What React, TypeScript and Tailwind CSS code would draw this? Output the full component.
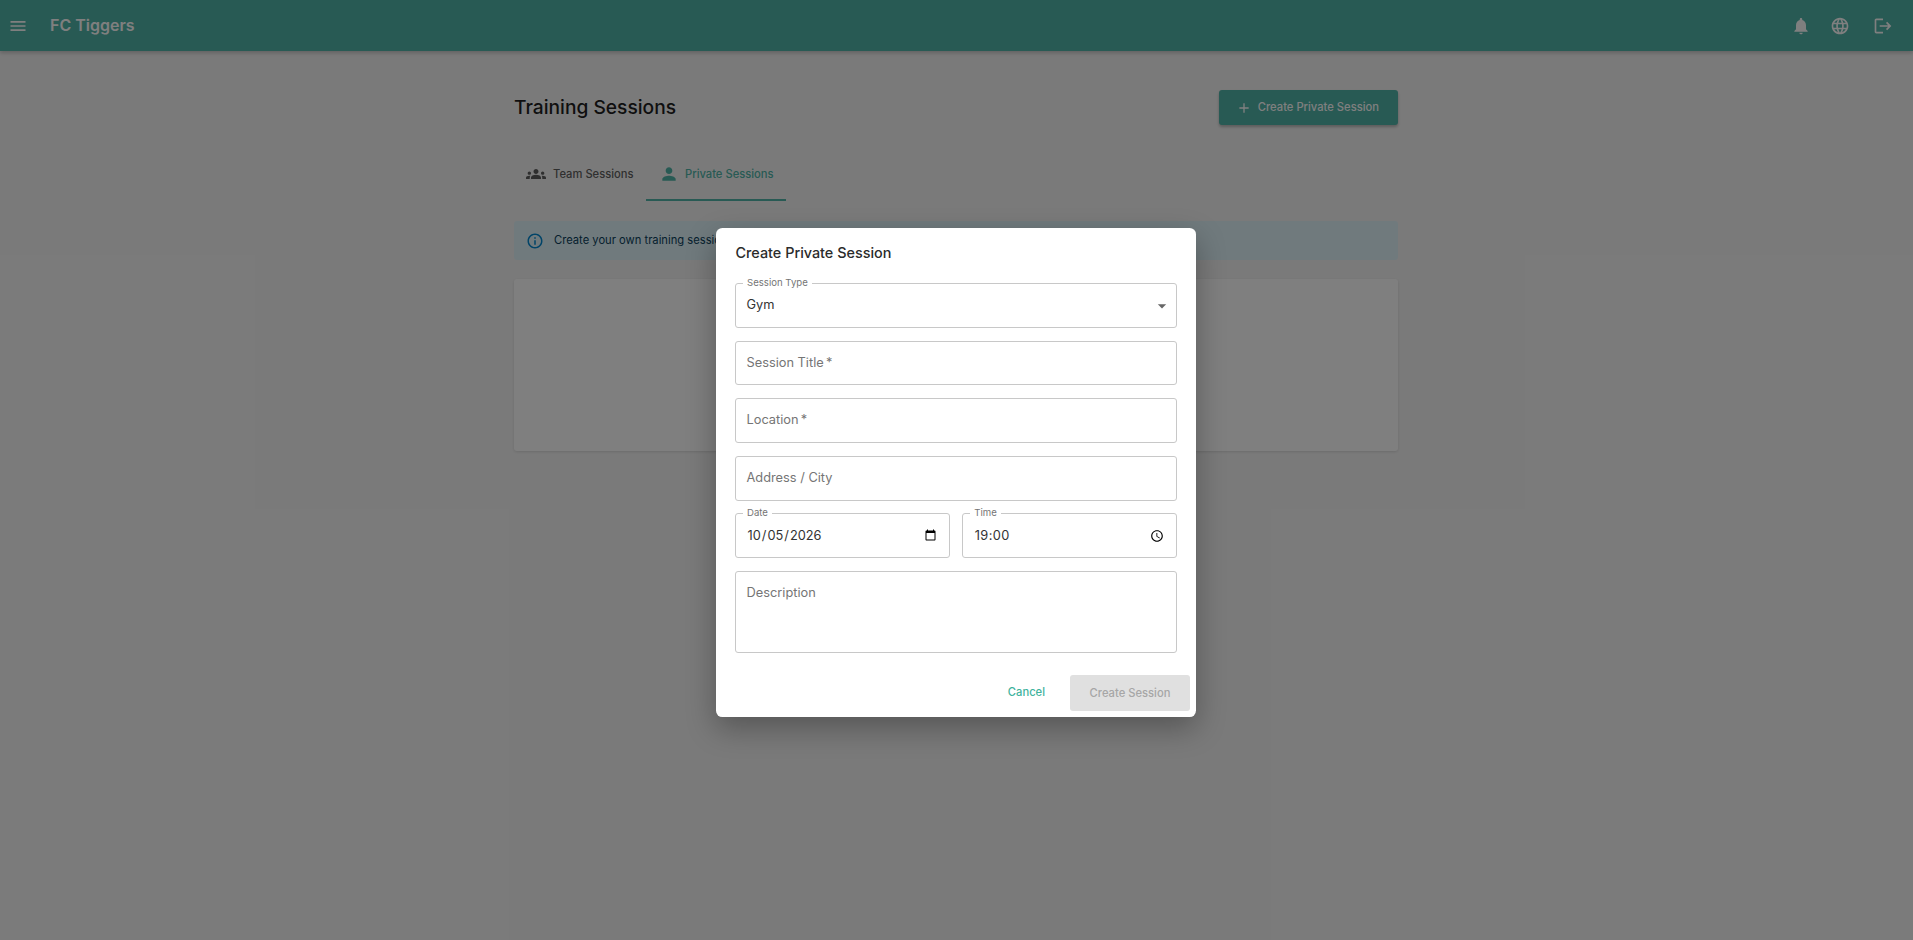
import { MdMenu, MdNotifications, MdLanguage, MdLogout, MdAdd, MdGroups, MdPerson, MdInfoOutline, MdArrowDropDown, MdOutlineAccessTime } from "react-icons/md";

const Field = ({ label, className = "h-[45px]" }: { label: string; className?: string }) => (
  <div className={`rounded-[3px] border border-[#c8c8c8] px-[10.5px] text-[12.8px] text-[#757575] ${className}`}>
    <div className="pt-[10.5px] leading-[20px]">{label}</div>
  </div>
);

const LegendField = ({ label, children }: { label: string; children: React.ReactNode }) => (
  <div className="relative flex h-[45px] items-center rounded-[3px] border border-[#c8c8c8] pl-[10.5px] pr-[10px] text-[12.8px] text-[#333]">
    <span className="absolute -top-[7px] left-[7px] bg-white px-[4px] text-[9.6px] leading-[12px] text-[#757575]">{label}</span>
    {children}
  </div>
);

const App = () => {
  return (
    <div className="relative h-[940px] w-full overflow-hidden bg-[#f5f5f5] font-['Inter',sans-serif]">
      <header className="flex h-[51px] items-center bg-[#50b4a8] pl-[8px] pr-[20px] text-white shadow-[0_2px_4px_rgba(0,0,0,0.2)]">
        <MdMenu className="h-[20px] w-[20px]" />
        <div className="ml-[22px] -mt-[1px] text-[16px] font-semibold">FC Tiggers</div>
        <div className="ml-auto flex items-center">
          <MdNotifications className="h-[20px] w-[20px]" />
          <MdLanguage className="ml-[18.5px] h-[20px] w-[20px]" />
          <MdLogout className="ml-[23.5px] h-[20px] w-[20px]" />
        </div>
      </header>

      <div className="pr-[1px]">
        <main className="mx-auto w-[884px] pt-[39px]">
          <div className="flex h-[35px] items-center justify-between">
            <h1 className="text-[19.2px] font-medium text-[#1f1f1f]">Training Sessions</h1>
            <button className="flex h-[35px] w-[179px] items-center justify-end gap-[6px] rounded-[3px] bg-[#50b4a8] pr-[19px] text-[11.2px] font-medium text-white shadow-[0_2px_3px_rgba(0,0,0,0.25)]">
              <MdAdd className="h-[16px] w-[16px]" />
              Create Private Session
            </button>
          </div>

          <nav className="mt-[30px] flex h-[46px] text-[11.2px] font-medium">
            <div className="flex w-[132px] items-center gap-[7px] pb-[8px] pl-[12px] text-[#5f5f5f]">
              <MdGroups className="h-[20px] w-[20px]" />
              Team Sessions
            </div>
            <div className="flex w-[140px] items-center gap-[6px] border-b-2 border-[#50b4a8] pb-[6px] pl-[13px] text-[#50b4a8]">
              <MdPerson className="h-[20px] w-[20px]" />
              Private Sessions
            </div>
          </nav>

          <div className="mt-[20px] flex h-[39px] items-center gap-[10px] rounded-[3px] bg-[#e1f5fb] pl-[12px] text-[11.2px] text-[#0b3f5c]">
            <MdInfoOutline className="h-[18px] w-[18px] text-[#0288d1]" />
            Create your own training sessions and invite your friends to join you.
          </div>

          <div className="mt-[19px] h-[172px] rounded-[3px] bg-white shadow-[0_1px_3px_rgba(0,0,0,0.12)]" />
        </main>
      </div>

      {/* modal backdrop */}
      <div className="absolute inset-0 flex items-start justify-center bg-black/50 pr-[1px] pt-[228px]">
        <div className="flex h-[489px] w-[480px] flex-col rounded-[6.4px] bg-white shadow-[0_11px_30px_rgba(0,0,0,0.3)]">
          <h2 className="pl-[19.5px] pt-[13px] text-[14.4px] font-medium leading-[24px] text-[#2b2b2b]">Create Private Session</h2>
          <div className="mt-[18px] flex flex-col gap-[13px] px-[19px]">
            <LegendField label="Session Type">
              <span className="-mt-[1px]">Gym</span>
              <MdArrowDropDown className="absolute right-[4px] h-[20px] w-[20px] text-[#666]" />
            </LegendField>
            <Field label={"Session Title\u2009*"} className="h-[44px]" />
            <Field label={"Location\u2009*"} />
            <Field label="Address / City" />
            <div className="-mt-px grid grid-cols-2 gap-[12.5px]">
              <LegendField label="Date">
                <input type="date" defaultValue="2026-10-05" className="w-full bg-transparent outline-none" />
              </LegendField>
              <LegendField label="Time">
                <span className="pl-px tracking-[0.4px]">19:00</span>
                <MdOutlineAccessTime className="absolute right-[12px] h-[14px] w-[14px] text-black" />
              </LegendField>
            </div>
            <Field label="Description" className="h-[82px]" />
          </div>
          <div className="mt-[22px] flex items-center justify-end pr-[6px]">
            <button className="mr-[25px] -mt-[1px] text-[11.2px] font-medium text-[#3fb39d]">Cancel</button>
            <button className="flex h-[36px] w-[120px] items-center justify-center rounded-[3px] bg-[#e0e0e0] text-[11.2px] font-medium text-[#a6a6a6]">Create Session</button>
          </div>
        </div>
      </div>
    </div>
  );
};

export default App;
